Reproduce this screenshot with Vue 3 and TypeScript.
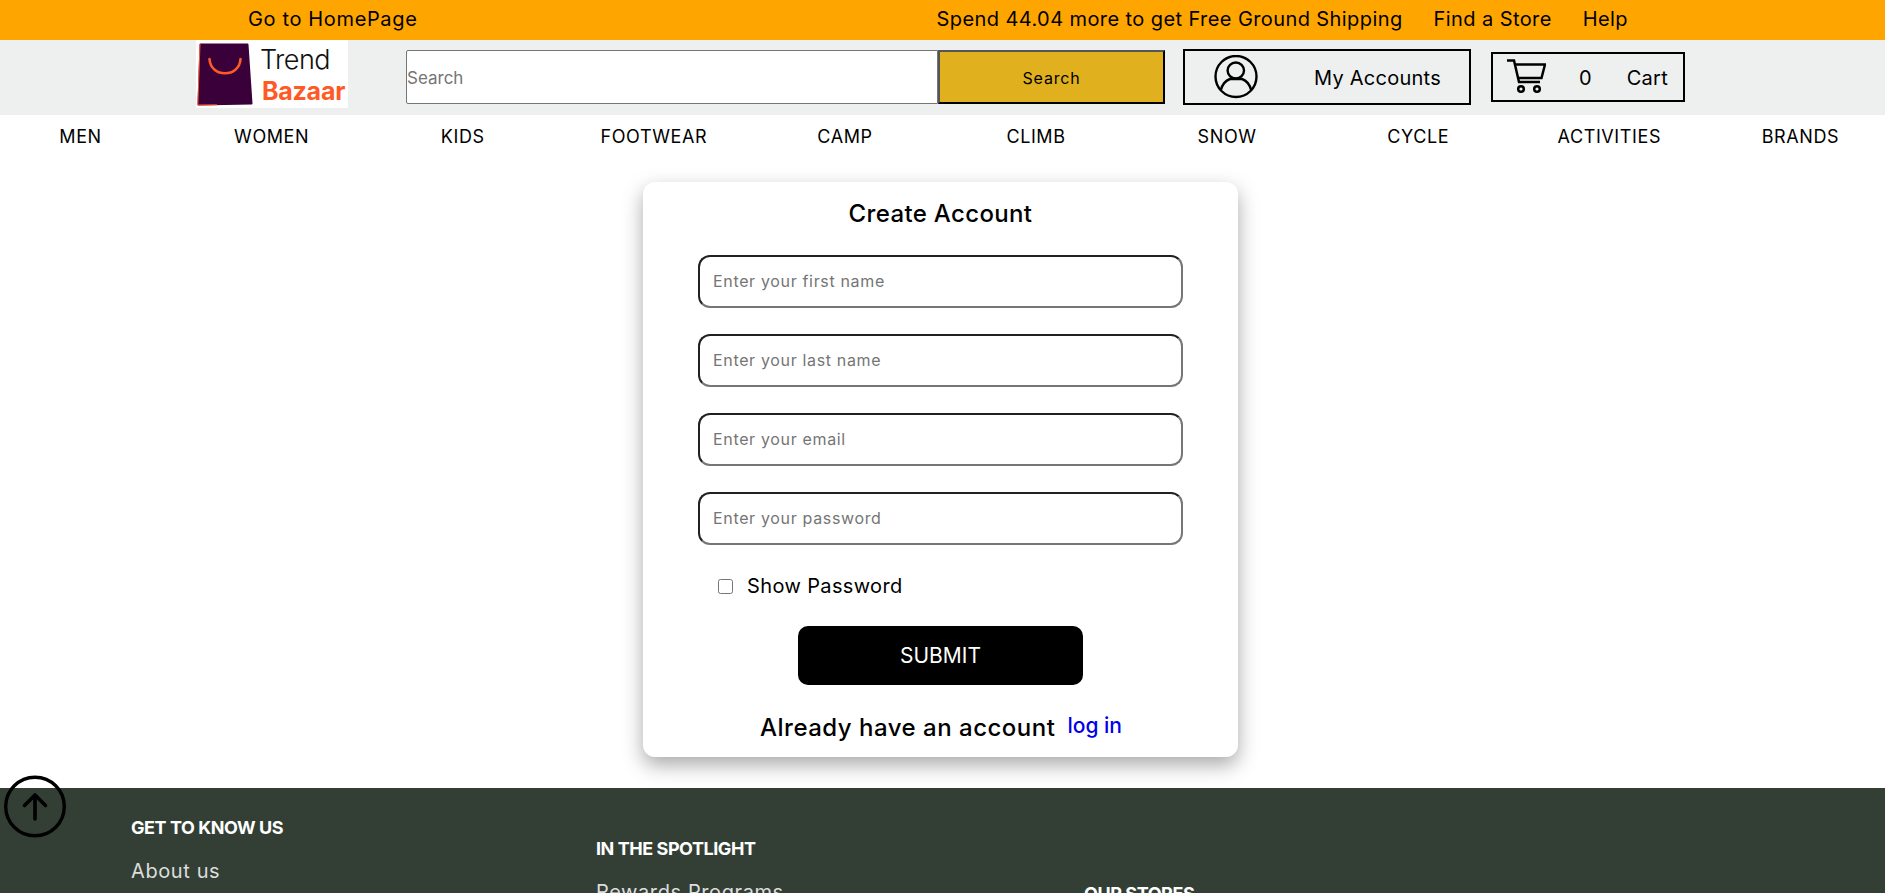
<script setup lang="ts">
const nav: string[] = ['MEN','WOMEN','KIDS','FOOTWEAR','CAMP','CLIMB','SNOW','CYCLE','ACTIVITIES','BRANDS']
const fields: string[] = ['Enter your first name','Enter your last name','Enter your email','Enter your password']
</script>

<template>
  <div class="page">
    <div class="topbar">
      <span class="home">Go to HomePage</span>
      <div class="topright">
        <span>Spend 44.04 more to get Free Ground Shipping</span>
        <span>Find a Store</span>
        <span>Help</span>
      </div>
    </div>
    <header class="header">
      <div class="logo">
        <svg class="bag" width="56" height="64" viewBox="0 0 56 64">
          <path d="M3.5 2.5 L50.5 2.5 L54.5 61.5 L1.5 62.5 Z" fill="#3a0039" stroke="#3a0039" stroke-width="2" stroke-linejoin="round" />
          <path d="M3 2 L0.8 63 L20 62.8" fill="none" stroke="#ff5a26" stroke-width="1" stroke-linejoin="round" />
          <path d="M12.5 17 C13.5 36 42.5 36 43.5 17" fill="none" stroke="#ff5a26" stroke-width="2.6" stroke-linecap="round" />
        </svg>
        <div class="logotext">
          <span class="trend">Trend</span>
          <span class="bazaar">Bazaar</span>
        </div>
      </div>
      <div class="search">
        <input class="search-input" placeholder="Search" />
        <button class="search-btn">Search</button>
      </div>
      <div class="accounts">
        <svg width="44" height="44" viewBox="0 0 44 44" fill="none" stroke="#000" stroke-width="2.4">
          <circle cx="22" cy="21.5" r="20.5" />
          <ellipse cx="21.8" cy="15.5" rx="8.2" ry="8" />
          <path d="M6.7 35.5 C8.5 28.5 13 25 16 24 H28 C31 25 35.5 28.5 37.3 35.5" />
        </svg>
        <span class="acc-label">My Accounts</span>
      </div>
      <div class="cart">
        <svg width="40" height="36" viewBox="0 0 40 36" fill="none" stroke="#000" stroke-width="2.5">
          <path d="M1 1.5 H8 L13 23 H34" />
          <path d="M9 5.5 H39 L35.5 19 H12" />
          <circle cx="15" cy="30" r="2.8" />
          <circle cx="31" cy="30" r="2.8" />
        </svg>
        <span class="cart-count">0</span>
        <span class="cart-label">Cart</span>
      </div>
    </header>
    <nav class="nav">
      <a v-for="item in nav" :key="item" class="nav-item">{{ item }}</a>
    </nav>
    <main class="main">
      <form class="card">
        <h2 class="title">Create Account</h2>
        <input v-for="f in fields" :key="f" class="field" :placeholder="f" />
        <label class="show">
          <input type="checkbox" class="check" />
          <span>Show Password</span>
        </label>
        <button type="button" class="submit">SUBMIT</button>
        <div class="already">
          <span class="already-text">Already have an account</span>
          <a class="login">log in</a>
        </div>
      </form>
    </main>
    <footer class="footer">
      <div class="col col1">
        <h4>GET TO KNOW US</h4>
        <a>About us</a>
      </div>
      <div class="col col2">
        <h4>IN THE SPOTLIGHT</h4>
        <a>Rewards Programs</a>
      </div>
      <div class="col col3">
        <h4>OUR STORES</h4>
      </div>
    </footer>
    <div class="totop">
      <svg width="62" height="63" viewBox="0 0 62 63" fill="none" stroke="#000" stroke-linecap="round">
        <circle cx="31" cy="31.5" r="29.3" stroke-width="3.4" />
        <path d="M31 44 V20.5 M20.5 30.5 L31 20 L41.5 30.5" stroke-width="3.6" stroke-linejoin="round" />
      </svg>
    </div>
  </div>
</template>

<style>
html, body { margin: 0; padding: 0; overflow: hidden; background: #fff; }
</style>

<style scoped>
.page {
  position: relative;
  height: 893px;
  overflow: hidden;
  font-family: Inter, "Noto Sans", sans-serif;
  color: #000;
  background: #fff;
}
.topbar {
  height: 40px;
  box-sizing: border-box;
  padding-bottom: 2px;
  background: #ffa500;
  display: flex;
  align-items: center;
  font-size: 20px;
  letter-spacing: 0.41px;
  padding-left: 248px;
  padding-right: 257px;
}
.home { letter-spacing: 0.64px; }
.topright { margin-left: auto; display: flex; gap: 31px; }
.header {
  height: 75px;
  box-sizing: border-box;
  padding-bottom: 1px;
  background: #eef0f0;
  display: flex;
  align-items: center;
  padding-left: 196px;
}
.logo {
  width: 152px;
  height: 68px;
  margin-top: -6px;
  background: #fff;
  display: flex;
  align-items: center;
  box-sizing: border-box;
  padding-left: 1px;
}
.logotext { display: flex; flex-direction: column; margin-left: 7px; padding-top: 2px; }
.trend { font-size: 27px; line-height: 31px; font-weight: 300; letter-spacing: -0.02em; color: #111; }
.bazaar { font-size: 25px; line-height: 29px; font-weight: 700; color: #ff5a26; letter-spacing: -0.01em; margin: 2px 0 0 2px; }
.search { display: flex; margin-left: 58px; height: 54px; }
.search-input {
  width: 532px;
  box-sizing: border-box;
  height: 54px;
  border: 1px solid #767676;
  border-radius: 2px 0 0 2px;
  padding: 1px 0 0;
  font-family: inherit;
  font-size: 17px;
  background: #fff;
  outline: none;
}
.search-btn {
  width: 227px;
  height: 54px;
  background: #e0b01e;
  border: 2px solid #000;
  border-top-color: #555;
  border-left-color: #555;
  font-family: inherit;
  font-size: 16px;
  letter-spacing: 0.8px;
  color: #000;
  padding: 1px 0 0;
}
.accounts {
  margin-left: 18px;
  width: 288px;
  height: 56px;
  box-sizing: border-box;
  border: 2.5px solid #000;
  display: flex;
  align-items: center;
  padding-left: 29px;
}
.acc-label { margin-left: 56px; padding-top: 1px; font-size: 20px; letter-spacing: 0.25px; }
.cart {
  margin-left: 20px;
  width: 194px;
  height: 50px;
  box-sizing: border-box;
  border: 2.5px solid #000;
  display: flex;
  align-items: center;
  padding-left: 13px;
  font-size: 20px;
}
.cart-count { margin-left: 33px; padding-top: 1px; }
.cart-label { margin-left: 35px; padding-top: 1px; letter-spacing: 0.3px; }
.nav {
  display: grid;
  grid-template-columns: repeat(10, 191.1px);
  margin-left: -15px;
  height: 40px;
  align-items: center;
  font-size: 18px;
  letter-spacing: 0.6px;
}
.nav-item { text-align: center; padding-top: 2px; }
.main {
  height: 633px;
  box-sizing: border-box;
  padding-top: 27px;
  padding-left: 643px;
}
.card {
  width: 595px;
  height: 575px;
  box-sizing: border-box;
  padding-top: 14px;
  background: #fff;
  border-radius: 12px;
  box-shadow: 0 8px 20px rgba(0, 0, 0, 0.34);
  display: flex;
  flex-direction: column;
}
.title {
  margin: 0 0 23px;
  text-align: center;
  font-size: 24px;
  line-height: 36px;
  font-weight: 500;
  letter-spacing: 0.35px;
}
.field {
  display: block;
  width: 485px;
  height: 53px;
  box-sizing: border-box;
  margin: 0 0 26px 55px;
  padding: 0 13px 1px;
  border: 2px inset #767676;
  border-radius: 12px;
  font-family: inherit;
  font-size: 16px;
  letter-spacing: 0.66px;
  background: #fff;
  outline: none;
}
.show {
  display: flex;
  align-items: center;
  height: 30px;
  margin-left: 75px;
  font-size: 20px;
  letter-spacing: 0.37px;
}
.check { width: 15px; height: 15px; margin: 0 14px 0 0; }
.submit {
  width: 285px;
  height: 59px;
  margin: 25px 0 0 155px;
  background: #000;
  color: #fff;
  border: none;
  border-radius: 10px;
  font-family: inherit;
  font-size: 21px;
  padding: 0;
}
.already {
  display: flex;
  margin: 25px 0 0 117px;
  height: 36px;
}
.already-text { font-size: 24px; font-weight: 500; line-height: 36px; letter-spacing: 0.5px; }
.login { margin-left: 12px; font-size: 21px; font-weight: 500; line-height: 31px; color: #0000ee; }
.footer {
  height: 105px;
  background: #333f35;
  display: flex;
  padding-left: 131px;
}
.col { display: flex; flex-direction: column; }
.col h4 { margin: 0; font-size: 18px; line-height: 27px; font-weight: 700; color: #fff; letter-spacing: -0.45px; }
.col a { font-size: 20px; line-height: 30px; color: #ddd; margin-top: 15px; letter-spacing: 0.6px; }
.col1 { width: 465px; padding-top: 26px; }
.col2 { width: 488px; padding-top: 47px; }
.col3 { padding-top: 92px; }
.totop { position: absolute; left: 4px; top: 775px; width: 62px; height: 63px; }
</style>
